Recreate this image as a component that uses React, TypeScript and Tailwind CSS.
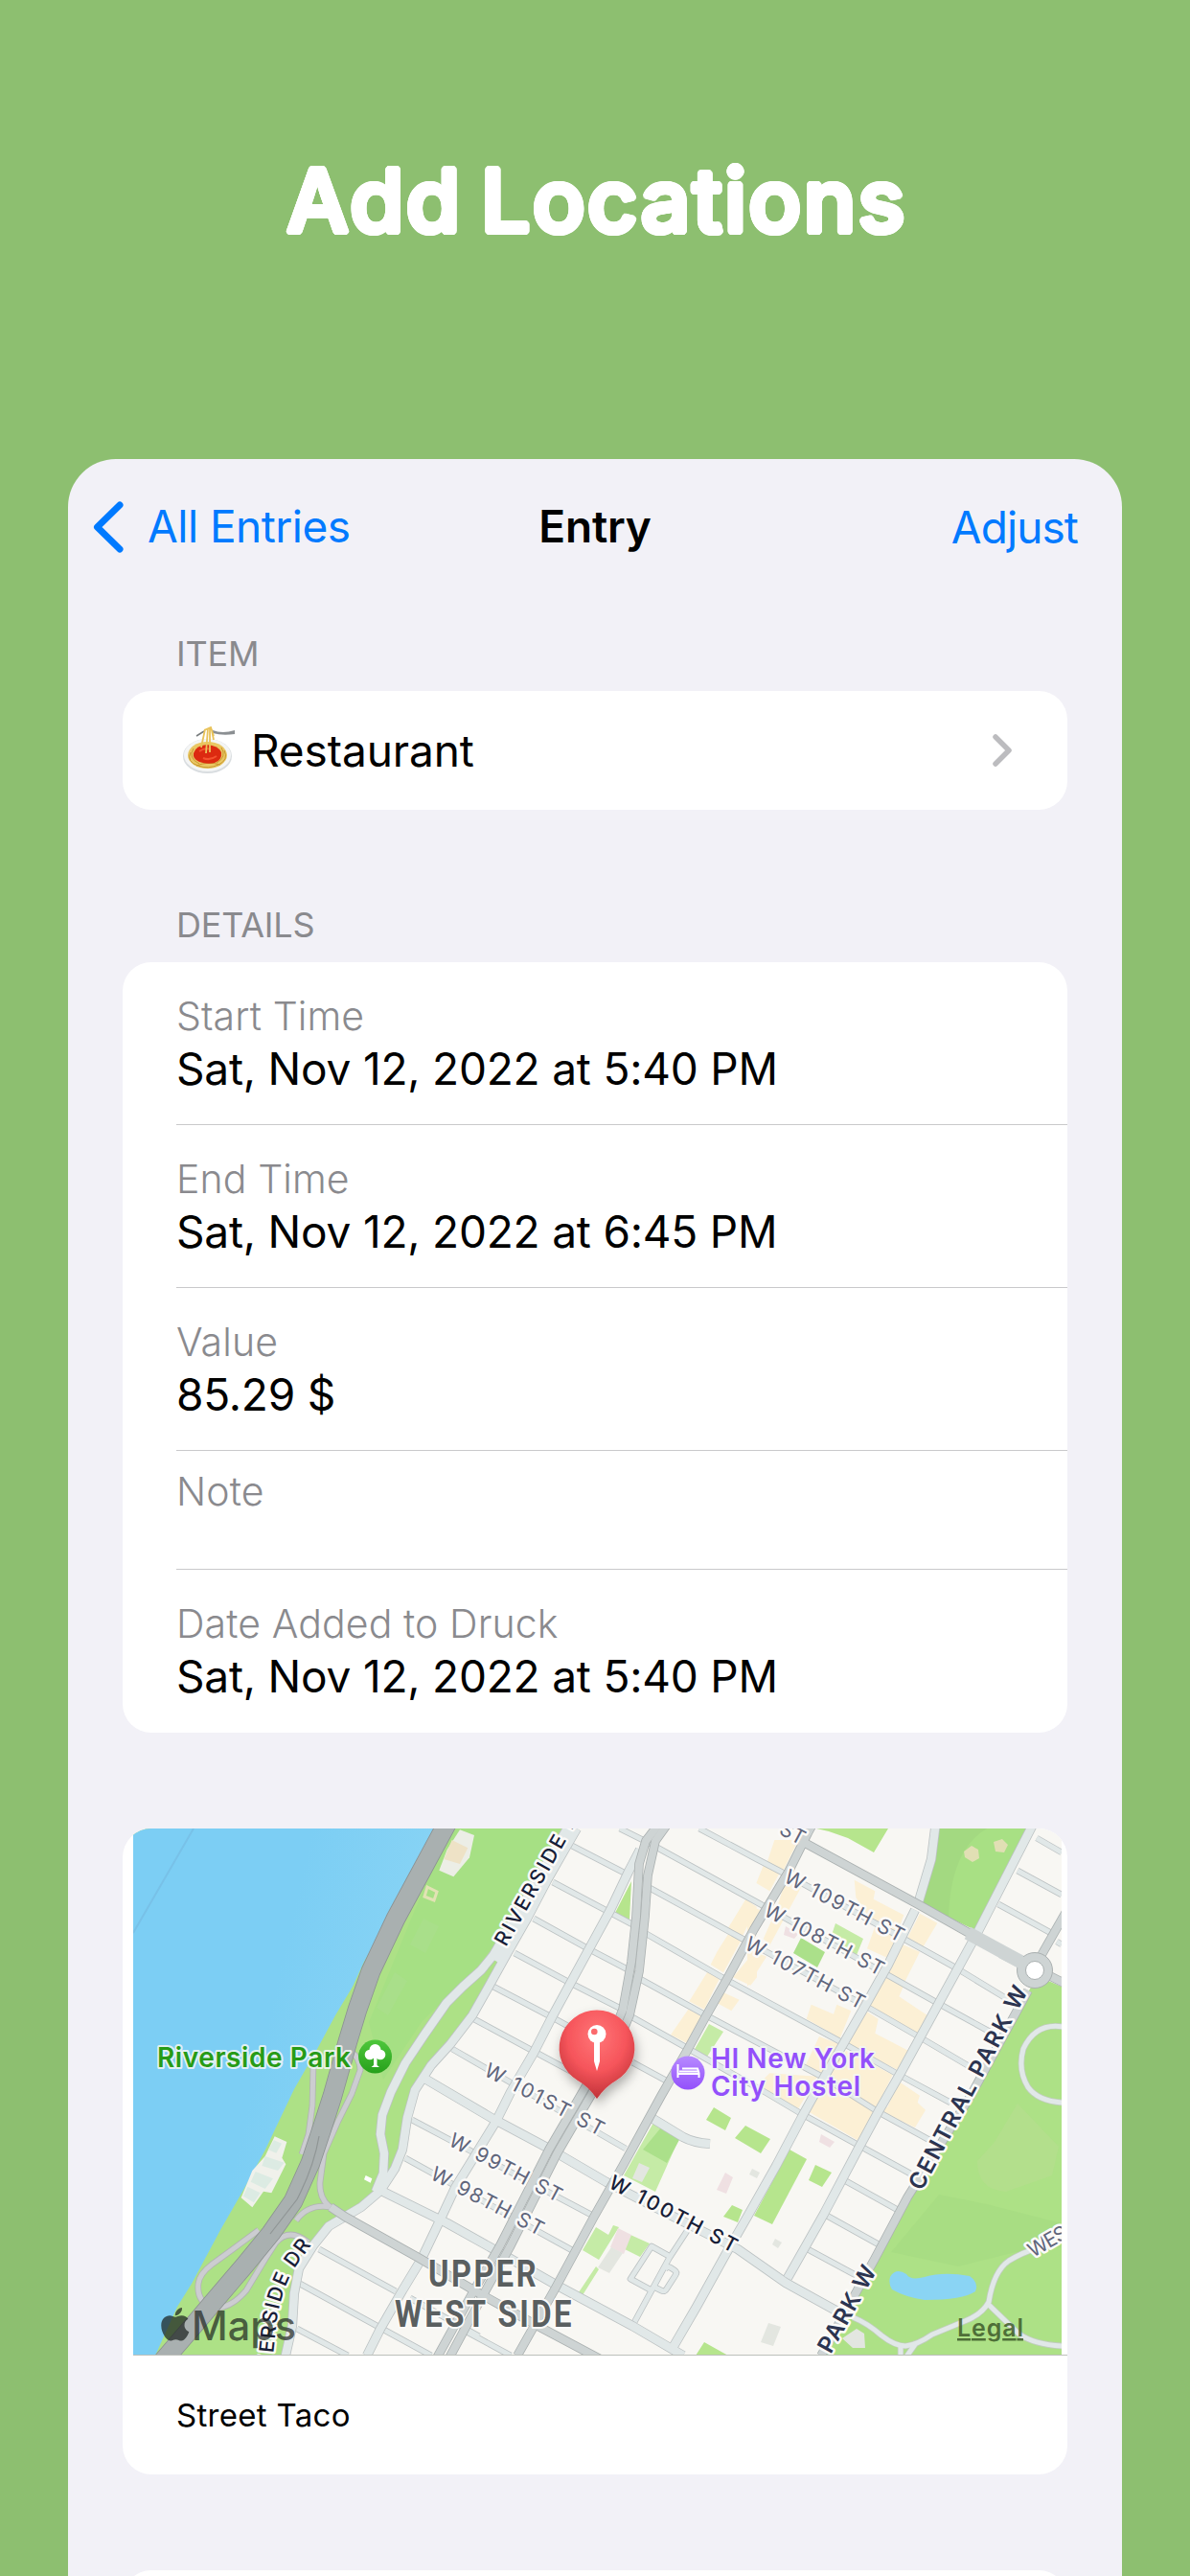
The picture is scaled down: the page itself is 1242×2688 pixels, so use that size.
import type { ReactNode } from "react";
import { FaApple } from "react-icons/fa";

interface Detail {
  label: string;
  value?: string;
}

const details: Detail[] = [
  { label: "Start Time", value: "Sat, Nov 12, 2022 at 5:40 PM" },
  { label: "End Time", value: "Sat, Nov 12, 2022 at 6:45 PM" },
  { label: "Value", value: "85.29 $" },
  { label: "Note" },
  { label: "Date Added to Druck", value: "Sat, Nov 12, 2022 at 5:40 PM" },
];

// Small cross streets
const streets = [
  "M597 1926L655 1956",
  "M577 1964L660 2008",
  "M557 2002L613 2033L655 2055",
  "M537 2038L593 2068L650 2097",
  "M515 2073L578 2106L640 2140",
  "M495 2107L558 2141L612 2170",
  "M472 2138L653 2242",
  "M430 2212L617 2311",
  "M423 2252L597 2348",
  "M333 2347L413 2391",
  "M428 2398L500 2438",
  "M313 2383L397 2429L450 2458",
  "M310 2430L363 2458",
  "M487 2433L533 2458",
  "M730 1908L790 1940L815 1953L943 2023L997 2053L1053 2087",
  "M647 1908L677 1923L790 1985L923 2059L982 2092L1033 2120",
  "M678 1970L773 2022L903 2093L962 2127L1013 2157",
  "M673 2017L753 2063L880 2132L940 2166L992 2194",
  "M668 2065L737 2103L860 2168L917 2204L970 2233",
  "M660 2105L717 2137L800 2184L837 2206L897 2239L950 2268",
  "M660 2152L697 2172",
  "M883 2276L937 2306",
  "M863 2312L917 2342",
  "M843 2347L893 2374",
  "M1082 1918L1108 1933",
  "M1062 1952L1108 1977",
  "M1042 1987L1097 2017",
  "M1103 2026L1108 2029",
  "M717 2328L698 2357L660 2427",
  "M698 2354L680 2344L658 2378L680 2390",
  "M694 2368q3-4 7 -1l3 2q3 2 1 5l-9 14q-2 4-6 2l-6-3",
];

// Wider light-coloured roads
const roads = [
  "M668 1930L656 1953L637 1993L613 2037L595 2070L577 2103L557 2142L533 2183L518 2213L475 2283L461 2313L440 2357L420 2390L397 2430L383 2458",
  "M602 1908L591 1927L571 1962L550 2002L530 2037L510 2073L493 2103L470 2133L450 2155L433 2181L425 2210L420 2243L412 2263L397 2286L377 2303L360 2313L343 2323L327 2343L312 2367L307 2393L305 2427L298 2458",
  "M592 1908L515 2040L502 2056L483 2073L466 2090L443 2123L423 2153L408 2183L399 2207L397 2227L401 2247L400 2268L392 2287",
  "M440 2167L513 2210L573 2242L633 2277L697 2310L770 2347L820 2382L867 2408L880 2415",
  "M400 2287L467 2320L517 2348L580 2384L660 2427L713 2458",
  "M955 1993L927 2050L903 2093L880 2133L857 2173L838 2207L810 2260L780 2313L757 2353L727 2407L702 2450",
  "M1080 1900L1020 2017L980 2090L940 2163L917 2203L897 2240L860 2310L822 2377",
  "M977 1900L972 1940L958 1987",
  "M675 2207L690 2216L713 2230Q724 2236 741 2237",
];

const arterials = [
  "M850 1900L843 1913L823 1953L787 2013L760 2063L735 2107L717 2140L690 2187L650 2260L620 2313L580 2387L540 2458",
  "M345 2303L360 2313L437 2356L500 2393L563 2428L627 2462",
  "M840 1923L958 1987L1013 2018L1067 2047",
  "M1073 2077L1013 2187L947 2293L913 2357L893 2393L857 2458",
  "M1087 2040L1112 1996",
  "M1092 2060L1112 2070",
  "M690 1900L674 1921L667 1945L664 2000L659 2047L650 2097L630 2145L608 2183L573 2243L522 2343L493 2393L455 2462",
  "M699 1900L684 1921L676 1957L673 2000L667 2057L657 2103L638 2148L617 2186L582 2246L532 2345L503 2397L468 2462",
];

const ramps = [
  "M327 2155L326 2197L322 2227L315 2248",
  "M366 2140Q376 2148 376 2160L367 2185L353 2213L338 2247L334 2277Q333 2297 348 2305",
  "M345 2303Q322 2299 309 2317",
  "M322 2340Q302 2324 288 2340L277 2357L257 2390Q240 2410 222 2408Q205 2402 207 2383Q208 2373 221 2363L243 2347L270 2327",
];

const highway =
  "M468 1900L440 1952L413 2002L387 2057L373 2097L363 2130L347 2187L338 2215L324 2257L306 2297L283 2330L256 2363L227 2397L199 2430L168 2466";

const paths = [
  "M1110 2115Q1081 2110 1068 2138Q1062 2160 1073 2178Q1084 2193 1110 2194",
  "M890 2418Q905 2424 920 2437Q934 2448 945 2448Q957 2447 973 2436L1007 2422Q1025 2415 1032 2402Q1037 2370 1053 2359Q1068 2350 1080 2347",
  "M1032 2405L1063 2435Q1080 2447 1110 2448",
  "M940 2447V2462M956 2445L944 2462",
];

const Lines = ({ d, color, edge, width }: { d: string[]; color: string; edge: string; width: number }) => (
  <g fill="none" strokeLinejoin="round">
    {d.map((p) => (
      <path key={p} d={p} stroke={edge} strokeWidth={width + 1.6} />
    ))}
    {d.map((p) => (
      <path key={p} d={p} stroke={color} strokeWidth={width} />
    ))}
  </g>
);

interface StreetLabelProps {
  x: number;
  y: number;
  angle: number;
  length: number;
  size?: number;
  tone?: string;
  weight?: number;
  children: ReactNode;
}

const StreetLabel = ({ x, y, angle, length, size = 21, tone = "#5f657b", weight = 400, children }: StreetLabelProps) => (
  <text
    transform={`translate(${x} ${y}) rotate(${angle})`}
    textLength={length}
    fontSize={size}
    fontWeight={weight}
    fill={tone}
    stroke="#fbfaf8"
    strokeWidth={5}
    strokeLinejoin="round"
    paintOrder="stroke"
  >
    {children}
  </text>
);

const StreetMap = () => (
  <svg
    viewBox="139 1908 969 550"
    className="block h-[550px] w-[969px]"
    fontFamily="Inter, sans-serif"
  >
    <defs>
      <linearGradient id="water" x1="0" y1="0" x2="1" y2="0.4">
        <stop offset="0.5" stopColor="#7ccef4" />
        <stop offset="1" stopColor="#8bd5f5" />
      </linearGradient>
      <radialGradient id="pin" cx="0.5" cy="0.3" r="0.7">
        <stop offset="0" stopColor="#ff7678" />
        <stop offset="0.55" stopColor="#f6555b" />
        <stop offset="1" stopColor="#c03238" />
      </radialGradient>
      <linearGradient id="tree" x1="0" y1="0" x2="0" y2="1">
        <stop offset="0" stopColor="#4fc73c" />
        <stop offset="1" stopColor="#26a01b" />
      </linearGradient>
      <linearGradient id="bed" x1="0" y1="0" x2="0" y2="1">
        <stop offset="0" stopColor="#b78aff" />
        <stop offset="1" stopColor="#9350fb" />
      </linearGradient>
      <filter id="shade" x="-50%" y="-50%" width="200%" height="200%">
        <feDropShadow dx="2" dy="6" stdDeviation="6" floodColor="#000" floodOpacity="0.3" />
      </filter>
    </defs>

    <rect x="139" y="1908" width="969" height="550" fill="#f8f7f3" />

    {/* Riverside Park */}
    <path
      d="M139 1908H602L571 1962L510 2073L493 2103L450 2155L433 2181L420 2243L397 2286L343 2323L312 2367L305 2427L298 2458H139Z"
      fill="#ade186"
    />
    <path d="M470 1908H585L530 2010L500 2050L440 2110L400 2170L385 2110L430 2000Z" fill="#a6e084" />
    <path
      d="M139 1900H465L397 2017L380 2047L368 2073L350 2103L330 2140L307 2180L277 2243L253 2287L230 2327L200 2383L185 2407L162 2458H139Z"
      fill="url(#water)"
    />
    <path d="M202 1908L139 2017" stroke="#78c1e8" strokeWidth="2" />

    {/* Central Park and Morningside Park */}
    <path d="M1078 2070L1092 2066L1108 2073V2458H860L893 2393L947 2293L1013 2187Z" fill="#ade186" />
    <path d="M1062 2195L1105 2240L1098 2270L1050 2287Q1020 2285 1020 2255L1038 2235Z" fill="#b3df8c" />
    <path d="M980 2290L1030 2300L1108 2320V2345L1060 2350L1000 2365L930 2350Z" fill="#a8dd83" />
    <path d="M978 1908H1075L1018 2014L960 1986Z" fill="#a3d981" />
    <path d="M1030 1908H1074L1018 2014L990 2000Q992 1930 1030 1908Z" fill="#a8e084" />
    <path d="M1006 1932l8-6 7 4 1 9-7 4-8-5zM1037 1922l9-3 6 6-4 8-9-1z" fill="#e1dfb4" />

    {/* Shops and other cream blocks */}
    <g transform="translate(780 1890) scale(.33333)" fill="#fcf0d5">
      <path d="M85 90L160 90L110 190L60 165ZM50 170L100 195L70 250L28 225ZM120 215L170 235L70 420L50 400L90 310ZM0 290L40 310L0 380ZM0 430L60 455L0 550Z" />
      <path d="M335 215L400 250L395 275L490 325L440 460L375 430L400 360L340 270ZM540 320L595 350L550 425L500 400ZM480 415L540 440L490 540L440 510ZM435 520L490 545L475 580L565 640L535 695L380 615ZM370 625L410 650L400 695L505 750L470 810L315 730ZM200 605L270 635L280 605L325 625L290 710L185 650Z" />
      <path d="M225 705L290 730L245 830L180 800ZM310 750L455 825L415 905L500 990L400 950L345 1030L190 940L235 840ZM70 820L220 830L160 930L20 870ZM480 850L540 890L530 920L440 900Z" />
      <path d="M460 880L520 900L558 935L525 990L430 945Z" />
    </g>
    <g transform="translate(450 1890) scale(.33333)" fill="#fcf0d5">
      <path d="M985 275L1020 300L975 390L930 365ZM930 385L970 405L915 505L875 480L895 440ZM870 495L905 520L855 620L808 595ZM805 620L845 640L800 725L750 700ZM1020 430L1020 520L1000 545L945 520ZM910 565L965 590L940 625L895 600Z" />
    </g>

    {/* Lawns */}
    <g fill="#b6e58d">
      <path d="M659 1963L657 2003L642 1996Z" />
      <path d="M852 1908H927L912 1933L885 1918L865 1911Z" />
      <path d="M824 2243L842 2253L806 2321L787 2312Z" />
      <path d="M851 2259L868 2267L858 2282L844 2275Z" />
      <path d="M745 2199L763 2210L757 2223L737 2212ZM778 2218L804 2232L794 2247L767 2231Z" />
      <path d="M764 2301L775 2306L770 2319L755 2313ZM735 2444L760 2458H726Z" />
    </g>
    <g fill="#c5eba6">
      <path d="M682 2215L709 2231L684 2287L651 2270ZM872 2007L901 2023L894 2040L867 2022ZM740 2112L755 2120L738 2146L724 2140Z" />
      <path d="M622 2324L635 2332L640 2322L646 2324L625 2358L608 2348ZM658 2332L678 2341L668 2355L652 2347ZM622 2365L625 2368L608 2395L604 2392Z" />
    </g>
    <path d="M690 2220L710 2231L696 2257L671 2243ZM836 2022L861 2037L853 2053L828 2038Z" fill="#abe08a" />
    <g fill="#efe0e2">
      <path d="M645 2325L659 2332L651 2352L637 2345ZM757 2267L765 2272L758 2289L748 2285ZM857 2227L871 2235L866 2241L855 2235ZM820 2010L833 2018L829 2023L818 2019Z" />
    </g>
    <g fill="#e3e6e0">
      <path d="M638 2345L650 2351L636 2372L624 2366ZM667 2257L678 2262L670 2277L660 2273ZM785 2263l8 4-3 6-8-4zM809 2336l7 4-4 6-6-4zM894 2430L902 2435L903 2450L890 2450L879 2440ZM802 2424l13 4-8 20-13-4z" />
    </g>

    {/* Park buildings and pond */}
    <g transform="translate(130 2180) scale(.33333)">
      <path d="M470 148L508 165L493 215L505 235L460 325L435 320L400 370L365 340L400 255L440 210Z" fill="#f0f1eb" />
      <path d="M468 160L492 170L475 200L450 190ZM440 210L500 230L480 255L430 240ZM410 258L465 280L440 312L395 290ZM385 305L425 325L405 355L372 335Z" fill="#dcebe3" />
      <path d="M755 270L775 280L770 293L750 283Z" fill="#fff" />
    </g>
    <g transform="translate(450 1890) scale(.33333)">
      <path d="M90 58L135 75L120 145L70 205L25 185L50 120Z" fill="#eceee6" />
      <path d="M65 90L115 115L90 165L40 150Z" fill="#eee2c6" />
    </g>
    <path d="M446 1969L456 1974L453 1983L443 1979Z" fill="none" stroke="#e2e2b4" strokeWidth="3" />
    <path d="M442 2002L458 2010L444 2038L428 2029ZM412 2058L425 2067L405 2103L393 2095Z" fill="#a9df8a" />
    <path
      d="M929 2376Q935 2366 946 2373Q950 2380 965 2376Q985 2370 1012 2375Q1022 2382 1018 2391Q1005 2400 965 2400Q945 2397 931 2389Q927 2383 929 2376Z"
      fill="#8ad4f4"
    />

    <Lines d={ramps} color="#cccdd1" edge="#b1b3b3" width={5} />
    <Lines d={paths} color="#e1e8e8" edge="#c0cdbd" width={5} />
    <Lines d={streets} color="#e1e8e8" edge="#bcc2c3" width={5} />
    <Lines d={roads} color="#e1e8e8" edge="#bcc2c3" width={8.5} />
    <path d="M596 1908L517 2046" stroke="#e1e8e8" strokeWidth="13" />
    <Lines d={arterials} color="#ced4d4" edge="#aab0b0" width={8} />
    <path d="M1010 2017L1067 2048" stroke="#ced4d4" strokeWidth="14" />
    <circle cx="1080" cy="2056" r="18.500" fill="#ced4d4" stroke="#aab0b0" strokeWidth="1" />
    <path d="M1045 2037L1072 2051" stroke="#ced4d4" strokeWidth="13" />
    <circle cx="1080" cy="2056" r="9.500" fill="#fff" stroke="#aab0b0" strokeWidth="1" />
    <Lines d={[highway]} color="#a9b0b0" edge="#8b9191" width={19} />
    <path d="M333 2229Q328 2260 310 2295L282 2331" fill="none" stroke="#8f9595" strokeWidth="1.2" />

    {/* Street names */}
    <StreetLabel x={528} y={2032} angle={-60.5} length={155} weight={500} tone="#171d37">RIVERSIDE D</StreetLabel>
    <path id="riverside-dr" d="M291 2540L285 2457L289 2420Q295 2385 310 2363L326 2341" fill="none" />
    <text
      fontSize="21"
      fontWeight="500"
      letterSpacing="1.8"
      fill="#171d37"
      stroke="#fbfaf8"
      strokeWidth="5"
      strokeLinejoin="round"
      paintOrder="stroke"
      textAnchor="end"
    >
      <textPath href="#riverside-dr" startOffset="100%">RIVERSIDE DR</textPath>
    </text>
    <StreetLabel x={812} y={1913} angle={28} length={27}>ST</StreetLabel>
    <StreetLabel x={817} y={1963} angle={27.8} length={138}>W 109TH ST</StreetLabel>
    <StreetLabel x={796} y={1998} angle={27.8} length={138}>W 108TH ST</StreetLabel>
    <StreetLabel x={776} y={2033} angle={27.8} length={138}>W 107TH ST</StreetLabel>
    <StreetLabel x={504} y={2165} angle={27.8} length={138}>W 101ST ST</StreetLabel>
    <StreetLabel x={467} y={2238} angle={27.8} length={130}>W 99TH ST</StreetLabel>
    <StreetLabel x={448} y={2273} angle={27.8} length={130}>W 98TH ST</StreetLabel>
    <StreetLabel x={634} y={2282} angle={27.8} length={148} weight={500} tone="#171d37">W 100TH ST</StreetLabel>
    <StreetLabel x={962} y={2287} angle={-62} length={237} size={24} weight={600} tone="#2c3450">CENTRAL PARK W</StreetLabel>
    <StreetLabel x={867} y={2457} angle={-61} length={100} size={24} weight={600} tone="#2c3450">PARK W</StreetLabel>
    <StreetLabel x={1078} y={2356} angle={-30} length={44}>WES</StreetLabel>

    <g
      fontWeight="700"
      fontSize="39.500"
      letterSpacing="3"
      fontFamily="Roboto, sans-serif"
      fill="#5a5f60"
      stroke="#fbfaf8"
      strokeWidth="4"
      paintOrder="stroke"
      strokeLinejoin="round"
    >
      <text x="447" y="2386" textLength="115" lengthAdjust="spacingAndGlyphs">UPPER</text>
      <text x="412" y="2427.500" textLength="187" lengthAdjust="spacingAndGlyphs">WEST SIDE</text>
    </g>

    {/* Points of interest */}
    <g fontWeight="600" fontSize="28" stroke="#f3f7f5" strokeOpacity="0.85" strokeWidth="4" paintOrder="stroke" strokeLinejoin="round">
      <text x="164" y="2156.5" textLength="202" fill="#279b16">Riverside Park</text>
      <text x="742" y="2158" textLength="171" fill="#9350fb">HI New York</text>
      <text x="742" y="2187" textLength="156" fill="#9350fb">City Hostel</text>
    </g>
    <circle cx="391.500" cy="2146" r="17.500" fill="url(#tree)" />
    <g fill="#fff">
      <circle cx="391.500" cy="2139" r="6" />
      <circle cx="386" cy="2144" r="5.300" />
      <circle cx="397" cy="2144" r="5.300" />
      <path d="M390 2144H393.500V2155L396 2157H387.500L390 2155Z" />
    </g>
    <circle cx="718" cy="2163" r="17.500" fill="url(#bed)" />
    <path
      d="M707.500 2154V2168M707.500 2164H729.500V2168M709 2161.500H729M712 2158.500H728L729.500 2163"
      fill="none"
      stroke="#fff"
      strokeWidth="2"
    />

    {/* Pin */}
    <g filter="url(#shade)">
      <path
        d="M623 2097.500A39.500 39.500 0 0 1 643 2171Q632 2177 623 2190Q614 2177 603 2171A39.500 39.500 0 0 1 623 2097.500Z"
        fill="url(#pin)"
      />
    </g>
    <circle cx="623" cy="2122.500" r="9.500" fill="#fff" />
    <circle cx="620.300" cy="2120" r="3.300" fill="#fb6a6d" />
    <path d="M620 2130H626V2151L623 2161L620 2151Z" fill="#fff" />

    {/* Attribution */}
    <FaApple x={163} y={2405.5} size={39.5} color="rgba(28,35,32,0.72)" />
    <text x="200" y="2442" fontSize="42" fontWeight="500" textLength="109" lengthAdjust="spacingAndGlyphs" fill="#1c2320" fillOpacity="0.7">
      Maps
    </text>
    <text x="999" y="2438" fontSize="25" fontWeight="600" textLength="69" fill="#3d5a2a" fillOpacity="0.85" textDecoration="underline">
      Legal
    </text>
  </svg>
);

const Spaghetti = () => (
  <svg viewBox="0 0 56 50" className="h-[50px] w-14">
    <ellipse cx="26.500" cy="31" rx="25.500" ry="18" fill="#d9dde0" />
    <ellipse cx="26.500" cy="30" rx="24.500" ry="17" fill="#f4f5f5" />
    <ellipse cx="26.500" cy="30" rx="20.500" ry="14" fill="#e9c764" />
    <g fill="none" stroke="#c9982f" strokeWidth="1">
      <path d="M9 27Q4 37 17 41Q27 45 38 40Q49 35 44 25M12 23Q6 33 18 39M41 22Q47 32 36 38M15 41Q27 36 40 40" />
    </g>
    <path d="M12 28Q14 20 26 19Q38 20 41 27Q42 35 34 38Q26 40 18 37Q11 34 12 28Z" fill="#dc2a10" />
    <path d="M18 26Q24 22 30 24M22 33Q29 36 36 31" fill="none" stroke="#f4532f" strokeWidth="2" />
    <path d="M32 4Q42 8 55 4V8Q42 10 32 7Z" fill="#8b8f92" />
    <path d="M15 10L23 5" stroke="#777b7d" strokeWidth="1.500" />
    <g fill="none" stroke="#e9c35a" strokeWidth="1.800">
      <path d="M24 3L20 22M27 2L25 28M29 2L29 27M31 4L33 14M23 4L30 1L33 10" />
    </g>
  </svg>
);

const SectionLabel = ({ children }: { children: ReactNode }) => (
  <h3 className="pl-14 text-[36px] leading-10 tracking-[-0.2px] text-[#8a8a8e]">{children}</h3>
);

export default function App() {
  return (
    <div className="flex h-[2688px] w-[1242px] flex-col items-center overflow-hidden bg-[#8dbf70] font-['Inter',sans-serif]">
      <header className="flex h-[479px] shrink-0 justify-center pt-[149px]">
        <h1 className="h-[120px] pl-1 text-[91px] leading-[120px] font-medium tracking-[2.3px] whitespace-nowrap text-white [word-spacing:-7px] [text-shadow:3px_0_#fff,-3px_0_#fff,0_3px_#fff,0_-3px_#fff,2.1px_2.1px_#fff,-2.1px_2.1px_#fff,2.1px_-2.1px_#fff,-2.1px_-2.1px_#fff,2.8px_1.1px_#fff,-2.8px_1.1px_#fff,2.8px_-1.1px_#fff,-2.8px_-1.1px_#fff,1.1px_2.8px_#fff,-1.1px_2.8px_#fff,1.1px_-2.8px_#fff,-1.1px_-2.8px_#fff]">
          Add Locations
        </h1>
      </header>

      <main className="flex h-[2209px] w-[1100px] shrink-0 flex-col rounded-t-[50px] bg-[#f2f1f7] px-[57px]">
        <nav className="-mx-[57px] grid h-[141px] shrink-0 grid-cols-3 items-center pr-[46px] pl-[26px] text-[46px]">
          <button className="flex items-center gap-[25px] text-[#007aff]">
            <svg viewBox="0 0 32 54" className="h-[54px] w-8" fill="none" stroke="currentColor" strokeWidth="7" strokeLinecap="round" strokeLinejoin="round">
              <path d="M28 4L4.500 27L28 50" />
            </svg>
            <span className="tracking-[-0.5px] whitespace-nowrap">All Entries</span>
          </button>
          <h2 className="pl-5 text-center font-semibold tracking-[-0.2px]">Entry</h2>
          <button className="pt-0.5 text-right tracking-[-0.9px] text-[#007aff]">Adjust</button>
        </nav>

        <div className="flex h-[101px] shrink-0 items-end pb-[19px]">
          <SectionLabel>ITEM</SectionLabel>
        </div>
        <div className="flex h-[124px] shrink-0 items-center rounded-[30px] bg-white pr-[57px] pl-[62px]">
          <Spaghetti />
          <span className="ml-4 text-[46px] tracking-[-0.1px]">Restaurant</span>
          <svg viewBox="0 0 22 36" className="ml-auto h-9 w-[22px]" fill="none" stroke="#bcbcbf" strokeWidth="5.500" strokeLinecap="round" strokeLinejoin="round">
            <path d="M4 4L18 18L4 32" />
          </svg>
        </div>

        <div className="flex h-[159px] shrink-0 items-end pb-[19px]">
          <SectionLabel>DETAILS</SectionLabel>
        </div>
        <div className="shrink-0 rounded-[30px] bg-white pl-14">
          {details.map(({ label, value }) => (
            <div
              key={label}
              className={
                value
                  ? "h-[170px] border-b border-[#c9c9cb] pt-[29px] last:border-b-0"
                  : "h-[124px] border-b border-[#c9c9cb] pt-[15px]"
              }
            >
              <div className="text-[41px] leading-[54px] font-light tracking-[0.1px] text-[#8a8a8e]">{label}</div>
              {value && <div className="text-[46px] leading-[56px] tracking-[-0.2px]">{value}</div>}
            </div>
          ))}
        </div>

        <div className="mt-[100px] h-[674px] shrink-0 overflow-hidden rounded-[30px] bg-white">
          <div className="ml-[11px]">
            <StreetMap />
            <div className="relative -mt-px h-px bg-[#bdc0bb]" />
          </div>
          <div className="flex h-[126px] items-center pl-14 text-[33px] tracking-[0.3px]">Street Taco</div>
        </div>

        <div className="mt-[100px] h-[124px] shrink-0 rounded-[30px] bg-white" />
      </main>
    </div>
  );
}
